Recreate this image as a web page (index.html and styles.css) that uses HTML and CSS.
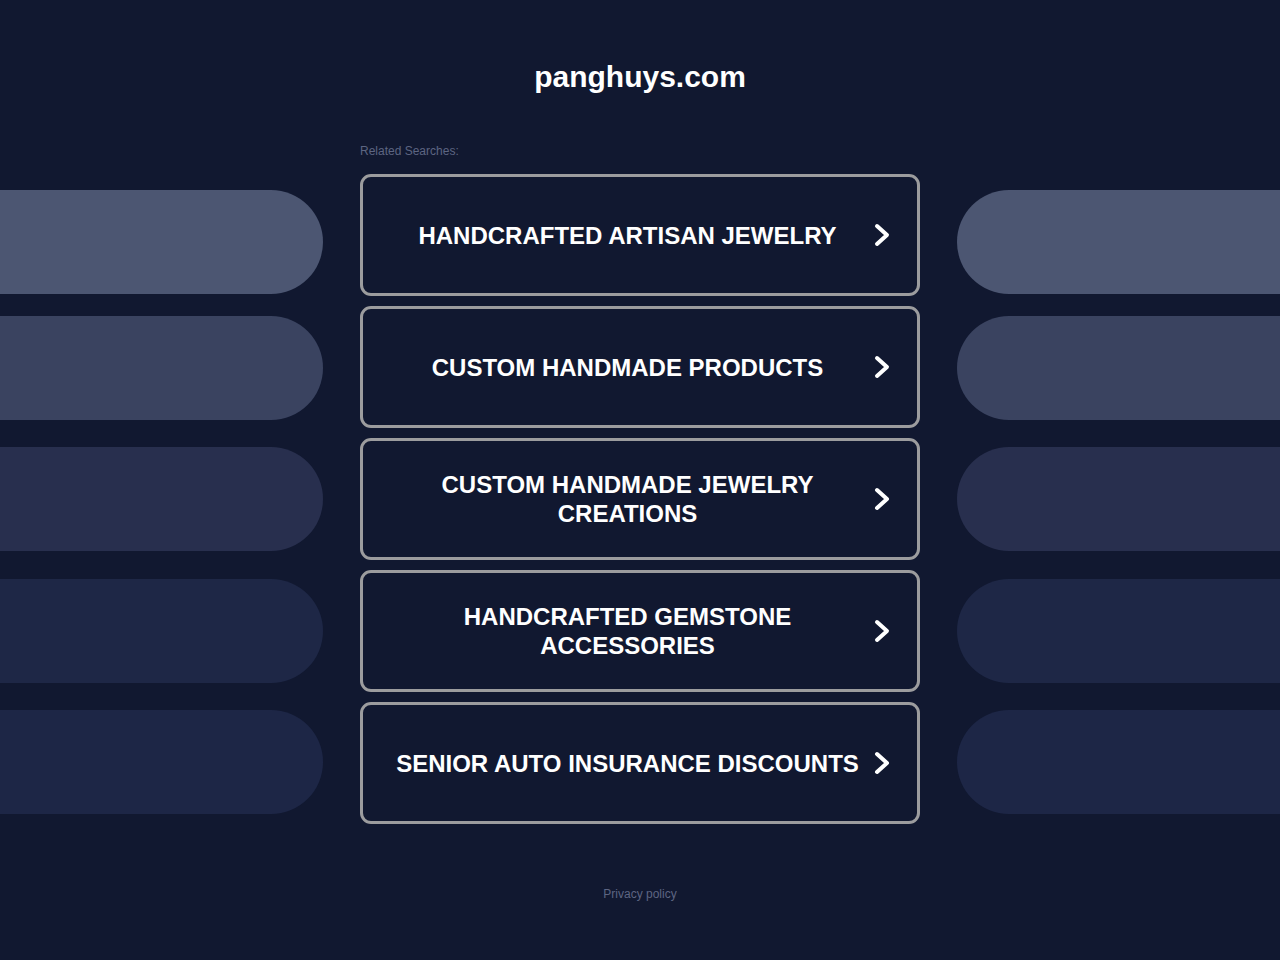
FILE: index.html
```html
<!DOCTYPE html>
<html lang="en">
<head>
<meta charset="utf-8">
<title>panghuys.com</title>
<link rel="stylesheet" href="styles.css">
</head>
<body>
<div class="page">
  <h1 class="title">panghuys.com</h1>
  <div class="related-wrap"><div class="related">Related Searches:</div></div>
  <div class="rows">
    <div class="row row-1">
      <div class="pill pill-left"></div>
      <a class="card" href="#"><span class="label">HANDCRAFTED ARTISAN JEWELRY</span><svg class="chev" viewBox="0 0 20 26" width="20" height="26"><path d="M5 4 L15 13 L5 22" fill="none" stroke="#fff" stroke-width="4" stroke-linecap="round" stroke-linejoin="round"/></svg></a>
      <div class="pill pill-right"></div>
    </div>
    <div class="row row-2">
      <div class="pill pill-left"></div>
      <a class="card" href="#"><span class="label">CUSTOM HANDMADE PRODUCTS</span><svg class="chev" viewBox="0 0 20 26" width="20" height="26"><path d="M5 4 L15 13 L5 22" fill="none" stroke="#fff" stroke-width="4" stroke-linecap="round" stroke-linejoin="round"/></svg></a>
      <div class="pill pill-right"></div>
    </div>
    <div class="row row-3">
      <div class="pill pill-left"></div>
      <a class="card" href="#"><span class="label">CUSTOM HANDMADE JEWELRY CREATIONS</span><svg class="chev" viewBox="0 0 20 26" width="20" height="26"><path d="M5 4 L15 13 L5 22" fill="none" stroke="#fff" stroke-width="4" stroke-linecap="round" stroke-linejoin="round"/></svg></a>
      <div class="pill pill-right"></div>
    </div>
    <div class="row row-4">
      <div class="pill pill-left"></div>
      <a class="card" href="#"><span class="label">HANDCRAFTED GEMSTONE ACCESSORIES</span><svg class="chev" viewBox="0 0 20 26" width="20" height="26"><path d="M5 4 L15 13 L5 22" fill="none" stroke="#fff" stroke-width="4" stroke-linecap="round" stroke-linejoin="round"/></svg></a>
      <div class="pill pill-right"></div>
    </div>
    <div class="row row-5">
      <div class="pill pill-left"></div>
      <a class="card" href="#"><span class="label">SENIOR AUTO INSURANCE DISCOUNTS</span><svg class="chev" viewBox="0 0 20 26" width="20" height="26"><path d="M5 4 L15 13 L5 22" fill="none" stroke="#fff" stroke-width="4" stroke-linecap="round" stroke-linejoin="round"/></svg></a>
      <div class="pill pill-right"></div>
    </div>
  </div>
  <div class="footer"><a class="privacy" href="#">Privacy policy</a></div>
</div>
</body>
</html>
```
FILE: styles.css
```css
html, body {
  margin: 0;
  padding: 0;
  background: #111830;
}
body {
  font-family: "Liberation Sans", Arial, sans-serif;
  color: #fff;
}
.page {
  width: 1280px;
  min-height: 960px;
  padding-top: 59px;
  box-sizing: border-box;
}
.title {
  margin: 0;
  text-align: center;
  font-size: 30px;
  font-weight: bold;
  line-height: 36px;
  color: #fff;
}
.related-wrap {
  width: 560px;
  margin: 49px auto 0;
}
.related {
  font-size: 12px;
  line-height: 14px;
  color: #5d6582;
}
.rows {
  margin-top: 16px;
  display: flex;
  flex-direction: column;
  gap: 10px;
}
.row {
  display: grid;
  grid-template-columns: 323px 560px 323px;
  column-gap: 37px;
  height: 122px;
}
.pill {
  height: 104px;
  align-self: start;
  margin-top: 9px;
}
.pill-left {
  border-radius: 0 52px 52px 0;
}
.pill-right {
  border-radius: 52px 0 0 52px;
}
.row-1 .pill { margin-top: 16px; background: #4c5672; }
.row-2 .pill { margin-top: 10px; background: #3a4360; }
.row-3 .pill { background: #282f4e; }
.row-4 .pill { background: #1e2746; }
.row-5 .pill { margin-top: 8px; background: #1d2646; }
.card {
  box-sizing: border-box;
  height: 122px;
  border: 3px solid #9c9c9e;
  border-radius: 11px;
  display: flex;
  align-items: center;
  padding: 0 25px 0 30px;
  text-decoration: none;
  color: #fff;
}
.label {
  flex: 1;
  text-align: center;
  font-size: 24px;
  font-weight: bold;
  line-height: 29px;
}
.chev {
  flex: none;
  margin-left: 10px;
  display: block;
}
.footer {
  margin-top: 60px;
  text-align: center;
}
.privacy {
  font-size: 12px;
  line-height: 14px;
  color: #5d6582;
  text-decoration: none;
}
```
